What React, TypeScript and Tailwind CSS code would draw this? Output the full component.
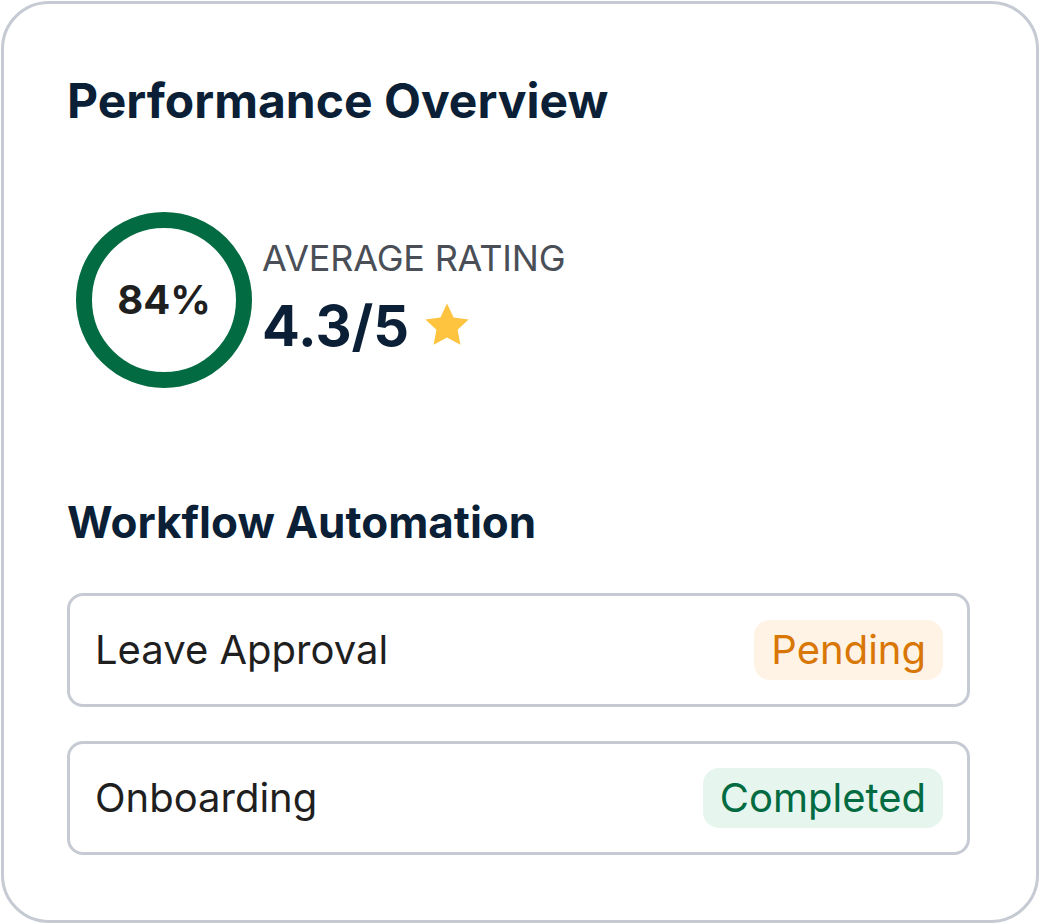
export default function App() {
    return (
        <div className="w-[1040px] h-[924px] bg-white" style={{ fontFamily: "Inter, 'Noto Sans', sans-serif" }}>
            <div className="m-px h-[922px] w-[1038px] rounded-[48px] border-[3px] border-[#c5cad3] bg-white pl-[63px] pr-[66px] pt-[68px]">

                {/* Heading */}
                <h1 className="text-[48px] font-bold leading-[58px] text-[#0b1f36]">Performance Overview</h1>

                {/* Score + rating */}
                <div className="mt-[82px] flex items-center gap-[10px] pl-[9px]">
                    <div className="flex h-[176px] w-[176px] shrink-0 items-center justify-center rounded-full border-[16px] border-[#026b41]">
                        <span className="text-[40px] font-bold leading-[48px] text-[#1f1f1f]">84%</span>
                    </div>
                    <div className="mt-[-6px] flex flex-col">
                        <span className="text-[36px] leading-[44px] tracking-[-0.2px] text-[#4a4f57]">AVERAGE RATING</span>
                        <div className="mt-[14px] flex items-center gap-[14px]">
                            <span className="text-[56px] font-bold leading-[64px] text-[#0b1f36]">4.3/5</span>
                            <svg width="48" height="46" viewBox="0 0 24 23" className="mt-[-2px]">
                                <path d="M12 0.8l3.3 6.9 7.5 1-5.5 5.2 1.4 7.5L12 17.8l-6.7 3.6 1.4-7.5L1.2 8.7l7.5-1z" fill="#fec33f" />
                            </svg>
                        </div>
                    </div>
                </div>

                {/* Workflow */}
                <h2 className="mt-[108px] text-[44px] font-bold leading-[53px] text-[#0b1f36]">Workflow Automation</h2>

                <div className="mt-[44px] flex flex-col gap-[34px]">
                    <div className="flex h-[114px] items-center justify-between rounded-[16px] border-[3px] border-[#c5cad3] pl-[25px] pr-[24px]">
                        <span className="text-[40px] text-[#1f1f1f]">Leave Approval</span>
                        <span className="rounded-[16px] bg-[#fff3e6] px-[17px] py-[8px] text-[40px] leading-[44px] text-[#d97706]">Pending</span>
                    </div>
                    <div className="flex h-[114px] items-center justify-between rounded-[16px] border-[3px] border-[#c5cad3] pl-[25px] pr-[24px]">
                        <span className="text-[40px] text-[#1f1f1f]">Onboarding</span>
                        <span className="rounded-[16px] bg-[#e6f6ee] px-[17px] py-[8px] text-[40px] leading-[44px] text-[#026b41]">Completed</span>
                    </div>
                </div>
            </div>
        </div>
    );
}
